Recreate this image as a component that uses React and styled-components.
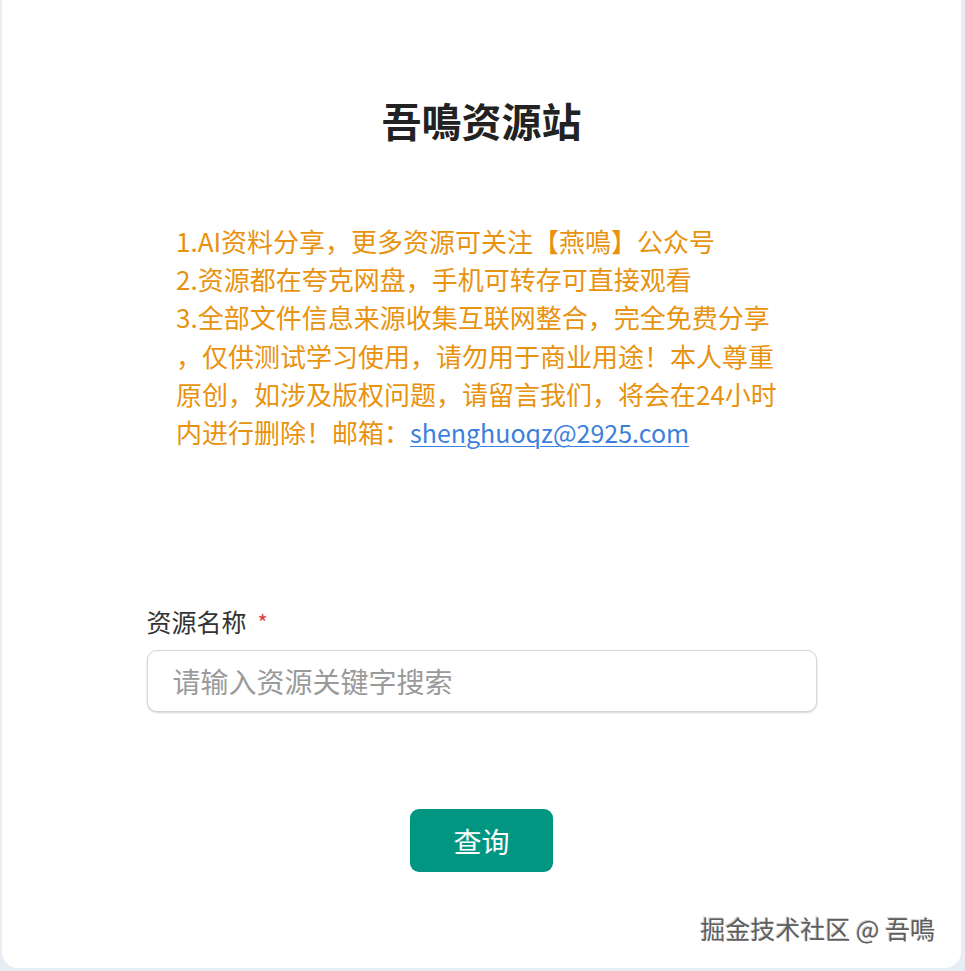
import React from 'react';
import styled, {createGlobalStyle} from "styled-components";

const GlobalStyle = createGlobalStyle`
  html, body {
    margin: 0;
    padding: 0;
    background-color: #e8edf4;
  }
  body {
    font-family: "Noto Sans CJK SC", "Microsoft YaHei", sans-serif;
  }
`;

const Page = styled.div`
  min-height: 971px;
  box-sizing: border-box;
  padding: 0 4px 3px 2px;
  display: flex;
`;

const Card = styled.main`
  flex: 1;
  position: relative;
  background-color: #fff;
  border-radius: 0 0 16px 16px;
  padding: 92px 0 0;
  display: flex;
  flex-direction: column;
  align-items: center;
`;

const Title = styled.h1`
  margin: 0;
  font-size: 40px;
  line-height: 56px;
  font-weight: 700;
  color: #222;
`;

const Notice = styled.div`
  margin: 74px 0 0;
  align-self: flex-start;
  padding-left: 174px;
  font-size: 26px;
  line-height: 38.2px;
  color: #e8930f;
`;

const NoticeLine = styled.div`
  white-space: nowrap;
`;

const Mail = styled.a`
  color: #3d7fde;
  font-size: 25px;
  text-decoration: underline;
  text-underline-offset: 3px;
  text-decoration-thickness: 1px;
`;

const Form = styled.form`
  width: 670px;
  margin-top: 155px;
  display: flex;
  flex-direction: column;
`;

const Label = styled.label`
  font-size: 25px;
  line-height: 30px;
  color: #333;
  display: flex;
  align-items: center;
  gap: 11px;
`;

const Required = styled.span`
  color: #e23b3b;
  font-size: 22px;
`;

const Input = styled.input`
  margin-top: 14px;
  height: 62px;
  box-sizing: border-box;
  border: 1px solid #d6d6d6;
  border-radius: 10px;
  box-shadow: 0 1px 2px rgba(0, 0, 0, 0.18);
  padding: 0 25px;
  font-family: inherit;
  font-size: 28px;
  color: #333;
  outline: none;
  &::placeholder {
    color: #9a9a9a;
  }
`;

const Button = styled.button`
  align-self: center;
  margin-top: 97px;
  width: 143px;
  height: 63px;
  border: none;
  border-radius: 9px;
  background-color: #009682;
  color: #fff;
  font-family: inherit;
  font-size: 28px;
  cursor: pointer;
`;

const Watermark = styled.div`
  position: absolute;
  right: 26px;
  bottom: 22px;
  font-size: 25px;
  color: #5e5e5e;
  text-shadow: 1px 1px 0 #fff, -1px -1px 0 #cfcfcf;
`;

const App = () => (
    <>
        <GlobalStyle/>
        <Page>
            <Card>
                <Title>吾鳴资源站</Title>
                <Notice>
                    <NoticeLine>1.AI资料分享，更多资源可关注【燕鳴】公众号</NoticeLine>
                    <NoticeLine>2.资源都在夸克网盘，手机可转存可直接观看</NoticeLine>
                    <NoticeLine>3.全部文件信息来源收集互联网整合，完全免费分享</NoticeLine>
                    <NoticeLine>，仅供测试学习使用，请勿用于商业用途！本人尊重</NoticeLine>
                    <NoticeLine>原创，如涉及版权问题，请留言我们，将会在24小时</NoticeLine>
                    <NoticeLine>内进行删除！邮箱：<Mail href="mailto:shenghuoqz@2925.com">shenghuoqz@2925.com</Mail></NoticeLine>
                </Notice>
                <Form onSubmit={e => e.preventDefault()}>
                    <Label htmlFor="keyword">资源名称<Required>*</Required></Label>
                    <Input id="keyword" placeholder="请输入资源关键字搜索"/>
                    <Button type="submit">查询</Button>
                </Form>
                <Watermark>掘金技术社区 @ 吾鳴</Watermark>
            </Card>
        </Page>
    </>
);

export default App;
